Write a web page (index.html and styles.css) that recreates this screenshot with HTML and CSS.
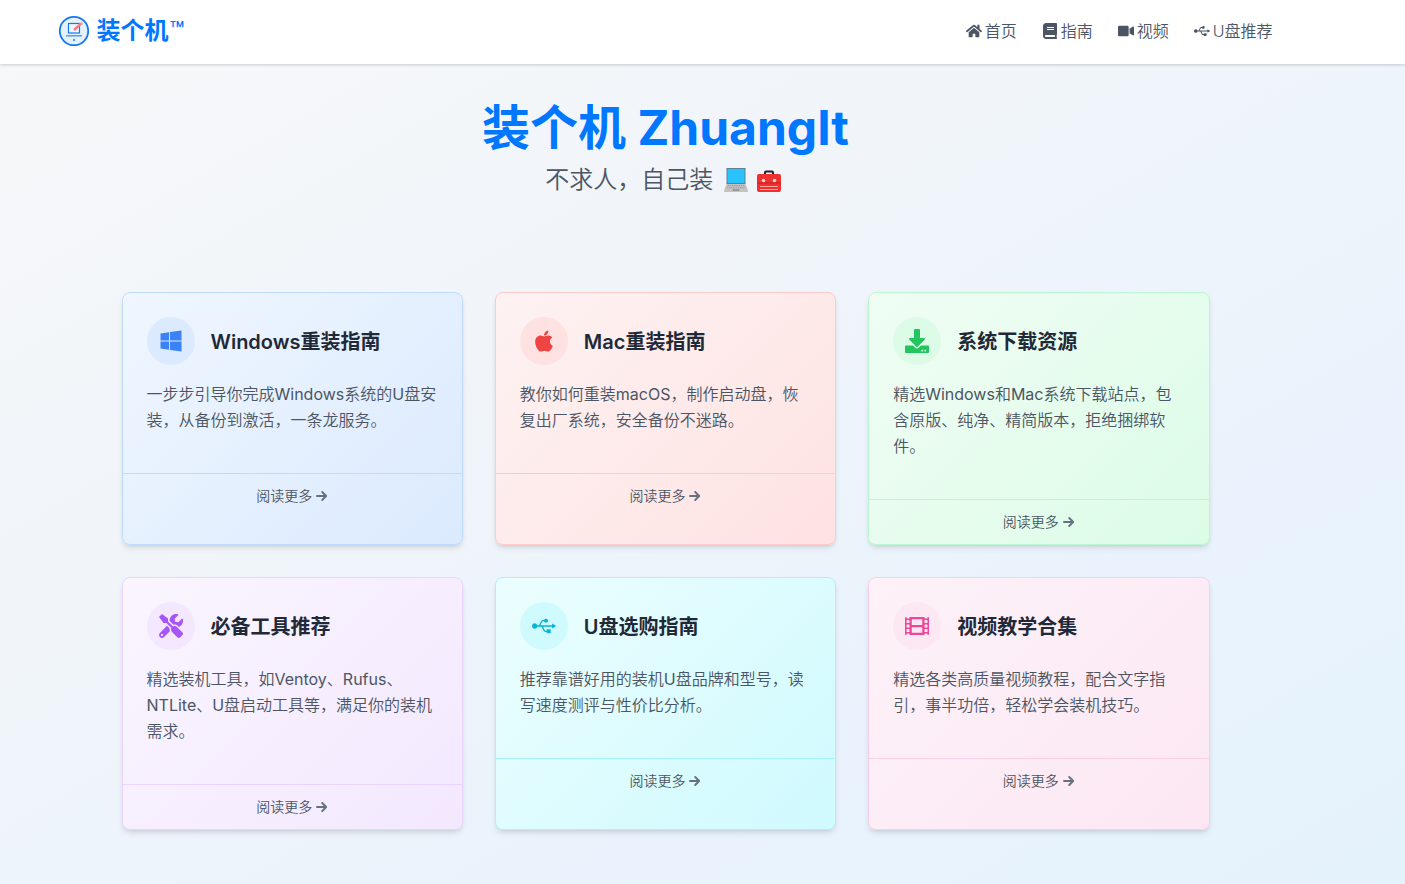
FILE: index.html
```html
<!DOCTYPE html>
<html lang="zh-CN">
<head>
    <meta charset="UTF-8">
    <meta name="viewport" content="width=device-width, initial-scale=1.0">
    <title>装个机 ZhuangIt</title>
    <link rel="stylesheet" href="styles.css">
</head>
<body>
    <svg class="sprite">
        <symbol id="usb" viewBox="0 0 640 512"><path d="M641.5 256c0 3.1-1.7 6.1-4.5 7.5L547.9 317c-1.4.8-2.8 1.4-4.5 1.4-1.4 0-3.1-.3-4.5-1.1-2.8-1.7-4.5-4.5-4.5-7.8v-35.6H295.7c25.3 39.6 40.5 106.9 69.6 106.9H392V354c0-5 3.9-8.9 8.9-8.9H490c5 0 8.9 3.9 8.9 8.9v89.1c0 5-3.9 8.9-8.9 8.9h-89.1c-5 0-8.9-3.9-8.9-8.9v-26.7h-26.7c-75.4 0-81.1-142.5-124.7-142.5H140.3c-8.1 30.6-35.9 53.5-69 53.5C32 327.3 0 295.3 0 256s32-71.3 71.3-71.3c33.1 0 61 22.8 69 53.5 39.1 0 43.9 9.5 74.6-60.4C255 88.7 273 95.7 323.8 95.7c7.5-20.9 27-35.6 50.4-35.6 29.5 0 53.5 23.9 53.5 53.5s-23.9 53.5-53.5 53.5c-23.4 0-42.9-14.8-50.4-35.6H294c-29.1 0-44.3 67.4-69.6 106.9h310.1v-35.6c0-3.3 1.7-6.1 4.5-7.8 2.8-1.7 6.4-1.4 8.9.3l89.1 53.5c2.8 1.1 4.5 4.1 4.5 7.2z"/></symbol>
        <symbol id="arrow" viewBox="0 0 12 12"><path d="M1 6h9.2M6.2 2L10.2 6l-4 4" fill="none" stroke="currentColor" stroke-width="1.9" stroke-linecap="round" stroke-linejoin="round"/></symbol>
    </svg>

    <header class="header">
        <div class="nav">
            <a class="logo">
                <svg class="logo-img" viewBox="0 0 32 32">
                    <circle cx="16" cy="16" r="14.2" fill="#e3f2fd" stroke="#1677f0" stroke-width="1.8"/>
                    <rect x="10.5" y="8.5" width="11" height="9.5" fill="#eef6ff" stroke="#1677f0" stroke-width="1.2"/>
                    <path d="M8 20.8h16" stroke="#5a9cf0" stroke-width="1.5"/>
                    <circle cx="16" cy="25" r="1" fill="#1677f0"/>
                    <path d="M16 15l7-6.3" stroke="#ff7b7b" stroke-width="2.4"/>
                    <circle cx="23.2" cy="8.8" r="1.4" fill="#ff8a80"/>
                </svg>
                <span class="logo-text">装个机<span class="tm">™</span></span>
            </a>
            <nav class="links">
                <a><svg class="nav-icon" viewBox="0 0 576 512"><path d="M280.37 148.26L96 300.11V464a16 16 0 0 0 16 16l112.06-.29a16 16 0 0 0 15.92-16V368a16 16 0 0 1 16-16h64a16 16 0 0 1 16 16v95.64a16 16 0 0 0 16 16.05L464 480a16 16 0 0 0 16-16V300L295.67 148.26a12.19 12.19 0 0 0-15.3 0zM571.6 251.47L488 182.56V44.05a12 12 0 0 0-12-12h-56a12 12 0 0 0-12 12v72.61L318.47 43a48 48 0 0 0-61 0L4.34 251.47a12 12 0 0 0-1.6 16.9l25.5 31A12 12 0 0 0 45.15 301l235.22-193.74a12.19 12.19 0 0 1 15.3 0L530.9 301a12 12 0 0 0 16.9-1.6l25.5-31a12 12 0 0 0-1.7-16.93z"/></svg>首页</a>
                <a><svg class="nav-icon" viewBox="0 0 448 512"><path d="M448 360V24c0-13.3-10.7-24-24-24H96C43 0 0 43 0 96v320c0 53 43 96 96 96h328c13.3 0 24-10.7 24-24v-16c0-7.5-3.5-14.3-8.9-18.7-4.2-15.4-4.2-59.3 0-74.7 5.4-4.3 8.9-11.1 8.9-18.6zM128 134c0-3.3 2.7-6 6-6h212c3.3 0 6 2.7 6 6v20c0 3.3-2.7 6-6 6H134c-3.3 0-6-2.7-6-6v-20zm0 64c0-3.3 2.7-6 6-6h212c3.3 0 6 2.7 6 6v20c0 3.3-2.7 6-6 6H134c-3.3 0-6-2.7-6-6v-20zm253.4 250H96c-17.7 0-32-14.3-32-32 0-17.6 14.4-32 32-32h285.4c-1.9 17.1-1.9 46.9 0 64z"/></svg>指南</a>
                <a><svg class="nav-icon" viewBox="0 0 576 512"><path d="M336.2 64H47.8C21.4 64 0 85.4 0 111.8v288.4C0 426.6 21.4 448 47.8 448h288.4c26.4 0 47.8-21.4 47.8-47.8V111.8c0-26.4-21.4-47.8-47.8-47.8zm189.4 37.7L416 177.3v157.4l109.6 75.5c21.2 14.6 50.4-.3 50.4-25.8V127.5c0-25.4-29.1-40.4-50.4-25.8z"/></svg>视频</a>
                <a><svg class="nav-icon"><use href="#usb"/></svg>U盘推荐</a>
            </nav>
        </div>
    </header>

    <main class="main">
        <div class="hero">
            <h1>装个机 ZhuangIt</h1>
            <p class="sub">不求人，自己装
                <svg class="emoji" viewBox="0 0 26 26">
                    <path d="M3.5 1h19v16h-19z" fill="#5f7f95"/>
                    <path d="M4.5 2h17v14h-17z" fill="#29c3ff"/>
                    <path d="M3.5 17h19l2.5 6.5v1.5H1v-1.5z" fill="#c4c4c4"/>
                    <path d="M4.5 18.5h17M3.8 20.7h18.4" stroke="#999" stroke-width="1" stroke-dasharray="1.5 .7"/>
                    <path d="M10 22h6l.6 2H9.4z" fill="#999"/>
                </svg>
                <svg class="emoji" viewBox="0 0 26 26">
                    <path d="M9 8V5.5q0-1 1-1h6q1 0 1 1V8" fill="none" stroke="#20222c" stroke-width="2"/>
                    <path d="M3 7h20q2 0 2 2v14q0 2-2 2H3q-2 0-2-2V9q0-2 2-2z" fill="#f0302f"/>
                    <path d="M1 16h24" stroke="#c92027" stroke-width="1"/>
                    <path d="M4 19.5h18M4 22.5h18" stroke="#ffa5a0" stroke-width="1"/>
                    <circle cx="7.5" cy="13.5" r="1.8" fill="#ffd5cf"/>
                    <circle cx="18.5" cy="13.5" r="1.8" fill="#ffd5cf"/>
                </svg>
            </p>
        </div>

        <div class="grid">
            <div class="card blue">
                <div class="card-body">
                    <div class="card-head">
                        <div class="circle"><svg viewBox="0 0 448 512"><path d="M0 93.7l183.6-25.3v177.4H0V93.7zm0 324.6l183.6 25.3V268.4H0v149.9zm203.8 28L448 480V268.4H203.8v177.9zm0-380.6v180.1H448V32L203.8 65.7z"/></svg></div>
                        <h2>Windows重装指南</h2>
                    </div>
                    <p>一步步引导你完成Windows系统的U盘安装，从备份到激活，一条龙服务。</p>
                </div>
                <div class="more">阅读更多 <svg class="arrow"><use href="#arrow"/></svg></div>
            </div>

            <div class="card red">
                <div class="card-body">
                    <div class="card-head">
                        <div class="circle"><svg viewBox="0 0 384 512"><path d="M318.7 268.7c-.2-36.7 16.4-64.4 50-84.8-18.8-26.9-47.2-41.7-84.7-44.6-35.5-2.8-74.3 20.7-88.5 20.7-15 0-49.4-19.7-76.4-19.7C63.3 141.2 4 184.8 4 273.5q0 39.3 14.4 81.2c12.8 36.7 59 126.7 107.2 125.2 25.2-.6 43-17.9 75.8-17.9 31.8 0 48.3 17.9 76.4 17.9 48.6-.7 90.4-82.5 102.6-119.3-65.2-30.7-61.7-90-61.7-91.9zm-56.6-164.2c27.3-32.4 24.8-61.9 24-72.5-24.1 1.4-52 16.4-67.9 34.9-17.5 19.8-27.8 44.3-25.6 71.9 26.1 2 49.9-11.4 69.5-34.3z"/></svg></div>
                        <h2>Mac重装指南</h2>
                    </div>
                    <p>教你如何重装macOS，制作启动盘，恢复出厂系统，安全备份不迷路。</p>
                </div>
                <div class="more">阅读更多 <svg class="arrow"><use href="#arrow"/></svg></div>
            </div>

            <div class="card green">
                <div class="card-body">
                    <div class="card-head">
                        <div class="circle"><svg viewBox="0 0 512 512"><path d="M216 0h80c13.3 0 24 10.7 24 24v168h87.7c17.8 0 26.7 21.5 14.1 34.1L269.7 378.3c-7.5 7.5-19.8 7.5-27.3 0L90.1 226.1c-12.6-12.6-3.7-34.1 14.1-34.1H192V24c0-13.3 10.7-24 24-24zm296 376v112c0 13.3-10.7 24-24 24H24c-13.3 0-24-10.7-24-24V376c0-13.3 10.7-24 24-24h146.7l49 49c20.1 20.1 52.5 20.1 72.6 0l49-49H488c13.3 0 24 10.7 24 24zm-124 88c0-11-9-20-20-20s-20 9-20 20 9 20 20 20 20-9 20-20zm64 0c0-11-9-20-20-20s-20 9-20 20 9 20 20 20 20-9 20-20z"/></svg></div>
                        <h2>系统下载资源</h2>
                    </div>
                    <p>精选Windows和Mac系统下载站点，包含原版、纯净、精简版本，拒绝捆绑软件。</p>
                </div>
                <div class="more">阅读更多 <svg class="arrow"><use href="#arrow"/></svg></div>
            </div>

            <div class="card purple">
                <div class="card-body">
                    <div class="card-head">
                        <div class="circle"><svg viewBox="0 0 512 512"><path d="M501.1 395.7L384 278.6c-23.1-23.1-57.6-27.6-85.4-13.9L192 158.1V96L64 0 0 64l96 128h62.1l106.6 106.6c-13.6 27.8-9.2 62.3 13.9 85.4l117.1 117.1c14.6 14.6 38.2 14.6 52.7 0l52.7-52.7c14.5-14.6 14.5-38.2 0-52.7zM331.7 225c28.3 0 54.9 11 74.9 31l19.4 19.4c15.8-6.9 30.8-16.5 43.8-29.5 37.1-37.1 49.7-89.3 37.9-136.7-2.2-9-13.5-12.1-20.1-5.5l-74.4 74.4-67.9-11.3L334 98.9l74.4-74.4c6.6-6.6 3.4-17.9-5.7-20.2-47.4-11.7-99.6.9-136.6 37.9-28.5 28.5-41.9 66.1-41.2 103.6l82.1 82.1c8.1-1.9 16.5-2.9 24.7-2.9zm-103.9 82l-56.7-56.7L18.7 402.8c-25 25-25 65.5 0 90.5s65.5 25 90.5 0l123.6-123.6c-7.6-19.9-9.9-41.6-5-62.7zM64 472c-13.2 0-24-10.8-24-24 0-13.3 10.7-24 24-24s24 10.7 24 24c0 13.2-10.7 24-24 24z"/></svg></div>
                        <h2>必备工具推荐</h2>
                    </div>
                    <p>精选装机工具，如Ventoy、Rufus、NTLite、U盘启动工具等，满足你的装机需求。</p>
                </div>
                <div class="more">阅读更多 <svg class="arrow"><use href="#arrow"/></svg></div>
            </div>

            <div class="card cyan">
                <div class="card-body">
                    <div class="card-head">
                        <div class="circle"><svg><use href="#usb"/></svg></div>
                        <h2>U盘选购指南</h2>
                    </div>
                    <p>推荐靠谱好用的装机U盘品牌和型号，读写速度测评与性价比分析。</p>
                </div>
                <div class="more">阅读更多 <svg class="arrow"><use href="#arrow"/></svg></div>
            </div>

            <div class="card pink">
                <div class="card-body">
                    <div class="card-head">
                        <div class="circle"><svg viewBox="0 0 512 512"><path d="M488 64h-8v20c0 6.6-5.4 12-12 12h-40c-6.6 0-12-5.4-12-12V64H96v20c0 6.6-5.4 12-12 12H44c-6.6 0-12-5.4-12-12V64h-8C10.7 64 0 74.7 0 88v336c0 13.3 10.7 24 24 24h8v-20c0-6.6 5.4-12 12-12h40c6.6 0 12 5.4 12 12v20h320v-20c0-6.6 5.4-12 12-12h40c6.6 0 12 5.4 12 12v20h8c13.3 0 24-10.7 24-24V88c0-13.3-10.7-24-24-24zM96 372c0 6.6-5.4 12-12 12H44c-6.6 0-12-5.4-12-12v-40c0-6.6 5.4-12 12-12h40c6.6 0 12 5.4 12 12v40zm0-96c0 6.6-5.4 12-12 12H44c-6.6 0-12-5.4-12-12v-40c0-6.6 5.4-12 12-12h40c6.6 0 12 5.4 12 12v40zm0-96c0 6.6-5.4 12-12 12H44c-6.6 0-12-5.4-12-12v-40c0-6.6 5.4-12 12-12h40c6.6 0 12 5.4 12 12v40zm272 208c0 6.6-5.4 12-12 12H156c-6.6 0-12-5.4-12-12v-96c0-6.6 5.4-12 12-12h200c6.6 0 12 5.4 12 12v96zm0-168c0 6.6-5.4 12-12 12H156c-6.6 0-12-5.4-12-12v-96c0-6.6 5.4-12 12-12h200c6.6 0 12 5.4 12 12v96zm112 152c0 6.6-5.4 12-12 12h-40c-6.6 0-12-5.4-12-12v-40c0-6.6 5.4-12 12-12h40c6.6 0 12 5.4 12 12v40zm0-96c0 6.6-5.4 12-12 12h-40c-6.6 0-12-5.4-12-12v-40c0-6.6 5.4-12 12-12h40c6.6 0 12 5.4 12 12v40zm0-96c0 6.6-5.4 12-12 12h-40c-6.6 0-12-5.4-12-12v-40c0-6.6 5.4-12 12-12h40c6.6 0 12 5.4 12 12v40z"/></svg></div>
                        <h2>视频教学合集</h2>
                    </div>
                    <p>精选各类高质量视频教程，配合文字指引，事半功倍，轻松学会装机技巧。</p>
                </div>
                <div class="more">阅读更多 <svg class="arrow"><use href="#arrow"/></svg></div>
            </div>
        </div>
    </main>
</body>
</html>
```
FILE: styles.css
```css
*{
  box-sizing: border-box;
  margin: 0;
  padding: 0;
}

body{
  font-family: Inter, "Noto Sans CJK SC", sans-serif;
  font-size: 16px;
  line-height: 24px;
  color: #4b5563;
  min-height: 884px;
  background: linear-gradient(150deg, #f7f8f9 0%, #f1f5f9 35%, #ebf3fc 65%, #e4f2fc 100%);
  overflow: hidden;
}

svg{
  fill: currentColor;
}

.sprite{
  display: none;
}

.header{
  height: 64px;
  background-color: white;
  box-shadow: 0 1px 3px rgba(0, 0, 0, 0.18);
  padding-right: 74px;
}

.nav{
  max-width: 1280px;
  height: 62px;
  margin: auto;
  padding: 0 32px;
  display: flex;
  align-items: center;
  justify-content: space-between;
}

.logo{
  display: flex;
  align-items: center;
  gap: 7px;
  color: #0077ff;
}

.logo-img{
  width: 32px;
  height: 32px;
}

.logo-text{
  font-size: 24px;
  font-weight: 700;
  line-height: 32px;
}

.tm{
  font-size: 24px;
  font-weight: 500;
  line-height: 1;
  margin-left: 1px;
}

.links{
  display: flex;
  gap: 25px;
  margin-right: 1px;
}

.links a{
  display: flex;
  align-items: center;
  gap: 3px;
  font-weight: 350;
}

.nav-icon{
  width: 16px;
  height: 16px;
}

.main{
  padding-right: 74px;
}

.hero{
  padding-top: 40px;
  height: 228px;
  text-align: center;
}

.hero h1{
  font-size: 48px;
  line-height: 48px;
  font-weight: 700;
  color: #0077ff;
}

.sub{
  margin-top: 12px;
  padding-right: 2px;
  font-size: 24px;
  line-height: 32px;
  font-weight: 350;
}

.emoji{
  width: 26px;
  height: 26px;
  vertical-align: -5px;
}

.emoji:first-child{
  margin-left: 3px;
}

.emoji:last-child{
  margin-right: 2px;
}

.grid{
  width: 1088px;
  margin: auto;
  display: grid;
  grid-template-columns: repeat(3, 1fr);
  gap: 32px;
}

.card{
  border: 1px solid;
  border-radius: 8px;
  box-shadow: 0 4px 6px -1px rgba(0, 0, 0, 0.1), 0 2px 4px -2px rgba(0, 0, 0, 0.1);
}

.card-body{
  padding: 24px;
}

.card-head{
  display: flex;
  align-items: center;
  gap: 16px;
  margin-bottom: 16px;
}

.circle{
  width: 48px;
  height: 48px;
  border-radius: 50%;
  display: flex;
  align-items: center;
  justify-content: center;
}

.circle svg{
  width: 24px;
  height: 24px;
}

.card h2{
  font-size: 20px;
  line-height: 28px;
  padding-top: 1px;
  font-weight: 600;
  color: #1f2937;
}

.card p{
  font-family: Inter, "Noto Sans CJK SC DemiLight", "Noto Sans CJK SC", sans-serif;
  line-height: 26px;
  font-weight: 400;
  margin-bottom: 16px;
}

.more{
  border-top: 1px solid;
  border-color: inherit;
  padding: 12px;
  display: flex;
  align-items: center;
  justify-content: center;
  gap: 4px;
  font-size: 14px;
  line-height: 20px;
  font-weight: 350;
}

.arrow{
  width: 12px;
  height: 12px;
  color: #667080;
}

.blue{
  background: linear-gradient(135deg, #eff6ff, #dbeafe);
  border-color: #bfdbfe;
}
.blue .circle{
  background-color: #dbeafe;
  color: #3b82f6;
}

.red{
  background: linear-gradient(135deg, #fef2f2, #fee2e2);
  border-color: #fecaca;
}
.red .circle{
  background-color: #fee2e2;
  color: #ef4444;
}

.green{
  background: linear-gradient(135deg, #f0fdf4, #dcfce7);
  border-color: #bbf7d0;
}
.green .circle{
  background-color: #dcfce7;
  color: #22c55e;
}

.purple{
  background: linear-gradient(135deg, #faf5ff, #f3e8ff);
  border-color: #e9d5ff;
}
.purple .circle{
  background-color: #f3e8ff;
  color: #a855f7;
}

.cyan{
  background: linear-gradient(135deg, #ecfeff, #cffafe);
  border-color: #a5f3fc;
}
.cyan .circle{
  background-color: #cffafe;
  color: #06b6d4;
}

.pink{
  background: linear-gradient(135deg, #fdf2f8, #fce7f3);
  border-color: #fbcfe8;
}
.pink .circle{
  background-color: #fce7f3;
  color: #ec4899;
}
```
